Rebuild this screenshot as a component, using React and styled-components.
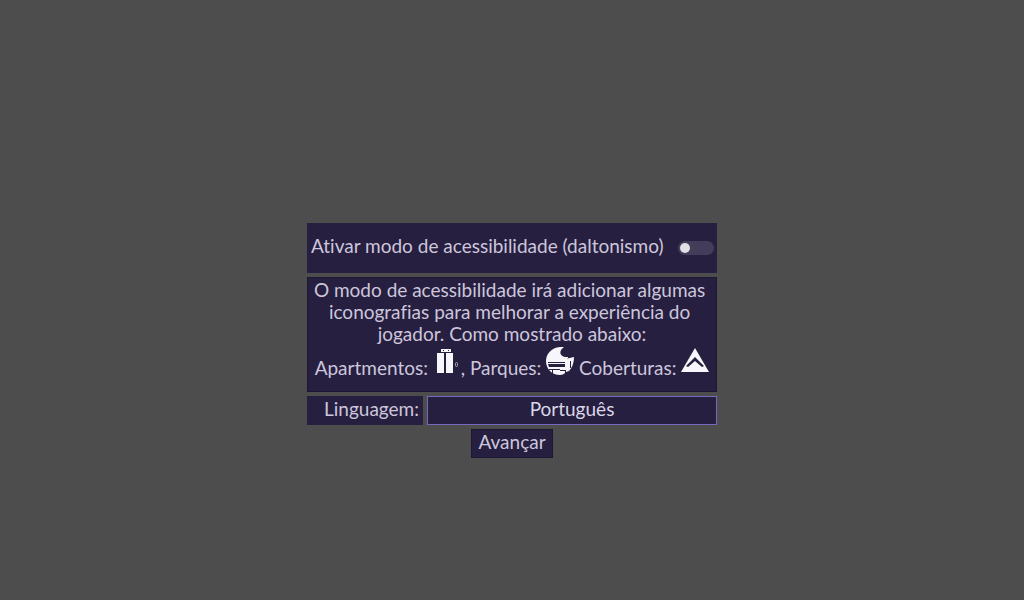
import { useState } from 'react';
import styled, { createGlobalStyle } from 'styled-components';

const GlobalStyle = createGlobalStyle`
  body {
    margin: 0;
    background: #4d4d4d;
  }

  * {
    box-sizing: border-box;
  }
`

const Screen = styled.main`
  display: flex;
  align-items: center;
  justify-content: center;
  min-height: 100vh;
  padding-top: 81px;
  color: #cdc6dc;
  font-family: Lato, 'Liberation Sans', sans-serif;
  font-size: 19px;
  font-variant-ligatures: none;
  line-height: 22px;
`

const Menu = styled.form`
  display: flex;
  flex-direction: column;
  gap: 4px;
  width: 410px;
  max-width: 100%;
`

const Panel = styled.div`
  background: #261f40;
  border: 1px solid #1d1733;
`

const ToggleRow = styled.label`
  display: flex;
  align-items: center;
  justify-content: space-between;
  height: 50px;
  padding: 0 3px 4px 4px;
  background: #261f40;
  white-space: nowrap;
`

const Switch = styled.input`
  display: flex;
  flex: none;
  align-items: center;
  justify-content: ${props => props.checked ? 'flex-end' : 'flex-start'};
  appearance: none;
  width: 36px;
  height: 14px;
  margin: 4px 0 0;
  padding: 0 2px;
  border-radius: 7px;
  background: #443d59;

  &::before {
    content: '';
    width: 10px;
    height: 10px;
    border-radius: 50%;
    background: #e2dfe6;
  }
`

const Help = styled(Panel)`
  padding: 1px 3px 12px;
  text-align: center;
`

const HelpText = styled.p`
  margin: 0;
  white-space: break-spaces; // the space at a line's end counts when it is centred
`

const Legend = styled.p`
  display: flex;
  align-items: flex-end;
  justify-content: center;
  margin: 0;
  height: 34px;
  white-space: pre;
`

const Icon = styled.svg`
  flex: none;
  width: 28px;
  height: 28px;
  margin-bottom: 4px;
  fill: #f7f6fa;
`

const LanguageRow = styled.div`
  display: flex;
  gap: 4px;
`

const LanguageLabel = styled.label`
  width: 116px;
  padding: 2px 4px 5px;
  background: #261f40;
  text-align: right;
`

const LanguageSelect = styled.select`
  flex: 1;
  appearance: none;
  height: 29px;
  padding: 0 0 4px;
  border: 1px solid #7568c0;
  border-radius: 0;
  background: #261f40;
  color: #dcd7e8;
  font: inherit;
  text-align: center;
  text-align-last: center;
`

const NextButton = styled.button`
  align-self: center;
  width: 82px;
  height: 29px;
  padding: 0 0 4px;
  border: 1px solid #1d1733;
  background: #261f40;
  color: inherit;
  font: inherit;
`

function ApartmentIcon() {
  return (
    <Icon viewBox="0 0 28 28" aria-hidden="true">
      <path d="M8 2h10v3H8zM4 6h7v20H4zM13 6h7v20h-7z" />
      <path d="M10 3h1v1h-1zM15 3h1v1h-1z" fill="#261f40" />
      <rect x="22.5" y="15.5" width="2" height="4" rx="1" fill="none" stroke="#aaa5b8" strokeWidth="1" />
    </Icon>
  );
}

function ParkIcon() {
  return (
    <Icon viewBox="0 0 28 28" aria-hidden="true">
      <path d="M18 0C7-1 0 6 0 14c0 8 6 14 14 14 2 0 4-1 5-2V13l3-2v-1c-7 1-11-5-4-10z" />
      <path d="M19 12c3-1 6-1 9-2 0 6-2 11-5 14l-3 1v-2h-1z" />
      <path d="M2 15h17v1H2zM2 17h17v3H3zM3 22h11v1H3z" fill="#261f40" />
      <path d="M6 23h1v4H6zM14 23h5v1h-5zM24 14h1v7h-1z" fill="#261f40" />
    </Icon>
  );
}

function RoofIcon() {
  return (
    <Icon viewBox="0 0 28 28" aria-hidden="true">
      <path d="M14 1 28 25H0z" />
      <path d="m5 19 9-9 9 9-2 1-7-6-7 6z" fill="#261f40" />
    </Icon>
  );
}

function App() {
  const [accessible, setAccessible] = useState(false);
  const [language, setLanguage] = useState('pt');

  return (
    <>
      <GlobalStyle />
      <Screen>
        <Menu onSubmit={event => event.preventDefault()}>
          <ToggleRow>
            Ativar modo de acessibilidade (daltonismo)
            <Switch
              type="checkbox"
              role="switch"
              checked={accessible}
              onChange={event => setAccessible(event.target.checked)}
            />
          </ToggleRow>
          <Help>
            <HelpText>
              O modo de acessibilidade irá adicionar algumas iconografias para melhorar a experiência do jogador. Como mostrado abaixo:
            </HelpText>
            <Legend>
              {'Apartmentos: '}
              <ApartmentIcon />
              {', Parques: '}
              <ParkIcon />
              {' Coberturas: '}
              <RoofIcon />
            </Legend>
          </Help>
          <LanguageRow>
            <LanguageLabel htmlFor="language">Linguagem:</LanguageLabel>
            <LanguageSelect id="language" value={language} onChange={event => setLanguage(event.target.value)}>
              <option value="pt">Português</option>
            </LanguageSelect>
          </LanguageRow>
          <NextButton type="submit">Avançar</NextButton>
        </Menu>
      </Screen>
    </>
  );
}

export default App;
